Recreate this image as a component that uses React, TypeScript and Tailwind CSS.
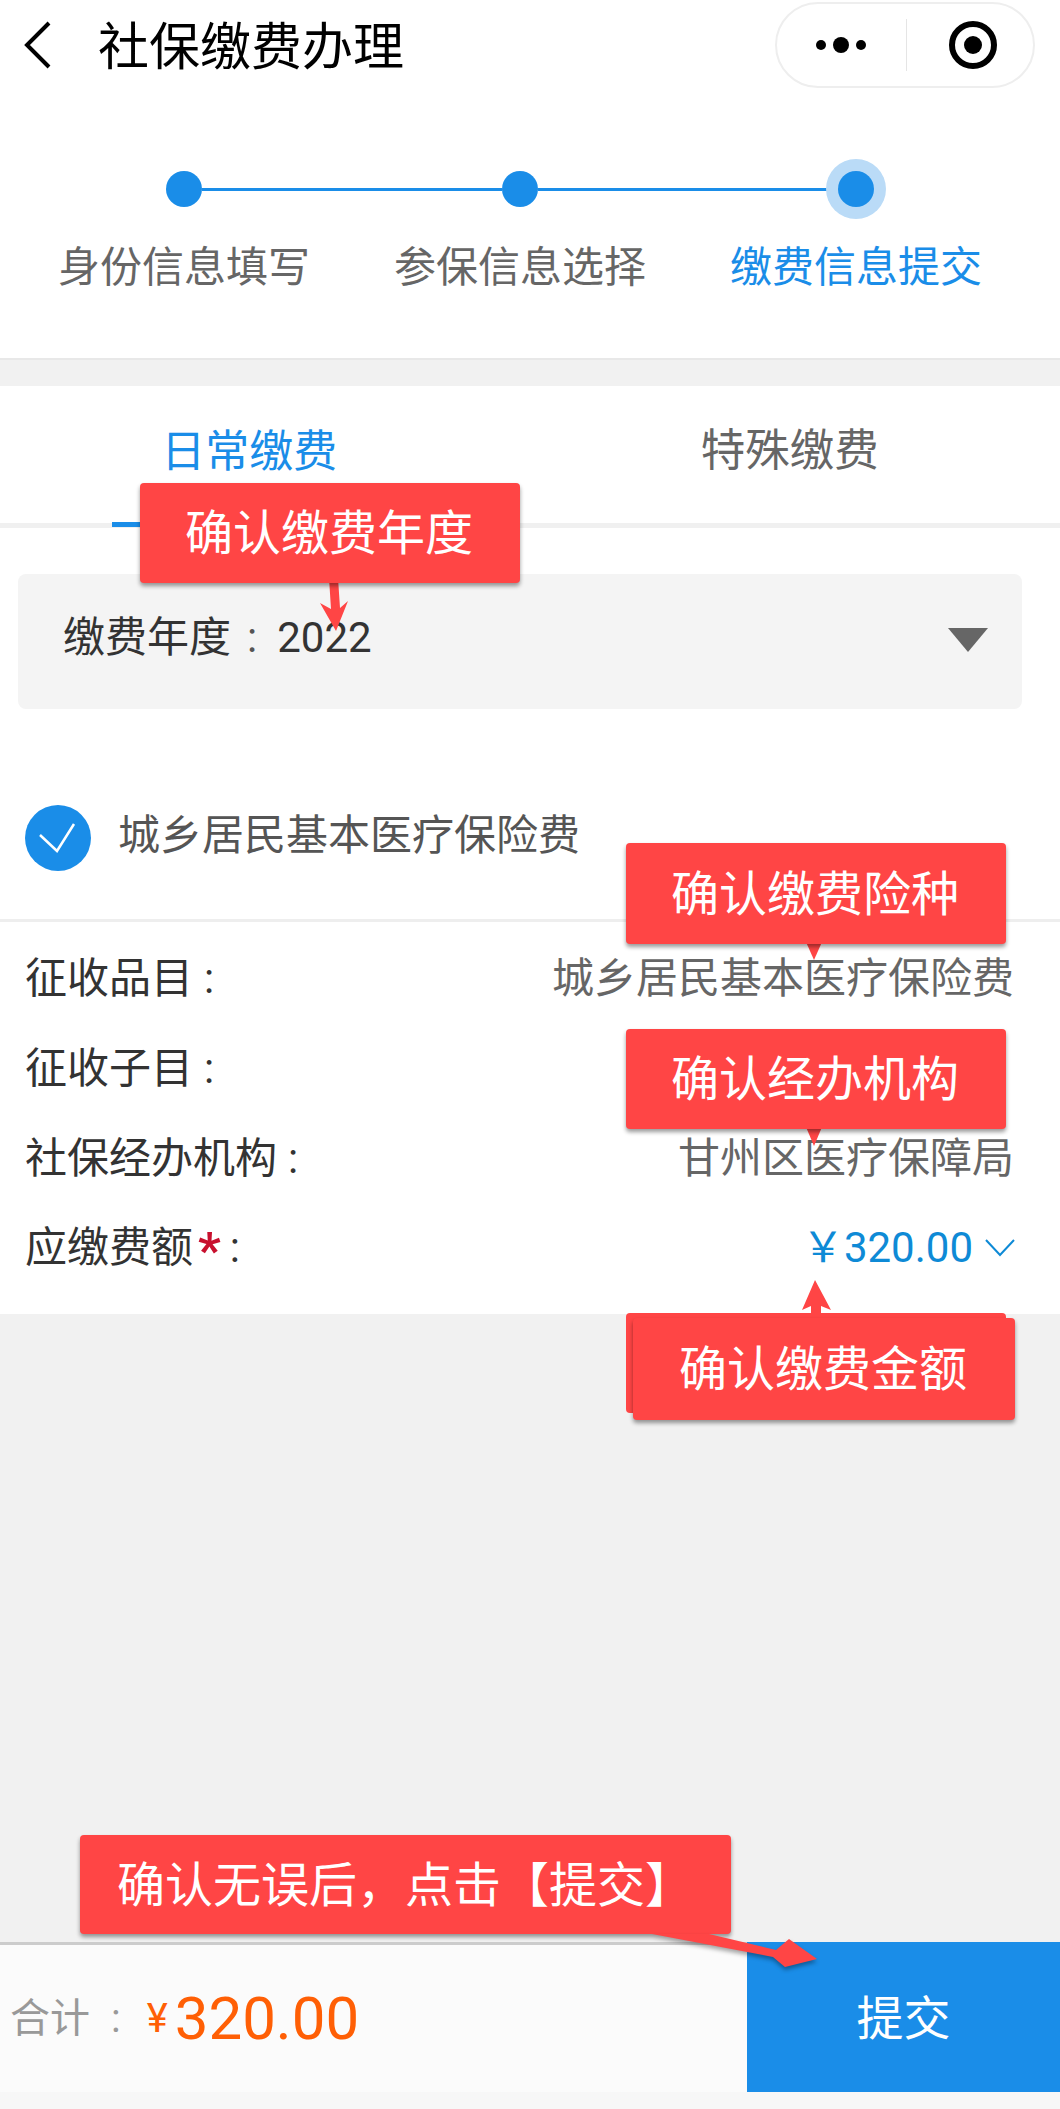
import React from "react";

const font = { fontFamily: 'Roboto, "Noto Sans CJK SC", sans-serif' };

function Callout({ className, children }: { className: string; children: React.ReactNode }) {
  return (
    <div className={"absolute flex items-center justify-center rounded-[4px] bg-[#ff4545] pt-[2px] text-[48px] leading-none text-white shadow-[0_3px_4px_rgba(0,0,0,0.4)] " + className}>
      {children}
    </div>
  );
}

function Row({ label, value }: { label: string; value?: string }) {
  return (
    <div className="flex h-[90px] items-center justify-between pl-[25px] pr-[46px]">
      <span className="text-[#333]">
        {label}
        <span className="ml-[11px]">:</span>
      </span>
      {value && <span className="text-[#666]">{value}</span>}
    </div>
  );
}

export default function App() {
  return (
    <div style={font} className="relative h-[2109px] w-[1060px] overflow-hidden bg-[#f7f7f7] text-[42px] leading-none">
      {/* header */}
      <header className="relative flex h-[88px] items-center bg-white pl-[24px]">
        <svg width="28" height="48" viewBox="0 0 28 48" className="mt-[2px]" fill="none" stroke="#000" strokeWidth="4">
          <path d="M25 2 3 24l22 22" />
        </svg>
        <h1 className="ml-[46px] mt-[6px] text-[51px] font-normal text-black">社保缴费办理</h1>
        <div className="absolute left-[775px] top-[2px] flex h-[86px] w-[260px] items-center rounded-[43px] border-[2px] border-[#eeeeee]">
          <svg width="52" height="16" viewBox="0 0 52 16" className="ml-[38px]" fill="#000">
            <circle cx="6" cy="8" r="5" />
            <circle cx="26" cy="8" r="8" />
            <circle cx="46" cy="8" r="5" />
          </svg>
          <div className="ml-[39px] h-[52px] w-[1px] bg-[#e5e5e5]" />
          <svg width="50" height="50" viewBox="0 0 50 50" className="ml-[41px]" fill="none">
            <circle cx="25" cy="25" r="21" stroke="#000" strokeWidth="6" />
            <circle cx="25" cy="25" r="9" fill="#000" />
          </svg>
        </div>
      </header>

      {/* stepper */}
      <section className="h-[272px] border-b-[2px] border-[#e8e8e8] bg-white pt-[83px]">
        <div className="flex items-center pl-[166px] pr-[186px]">
          <div className="h-[36px] w-[36px] rounded-full bg-[#1a8de8]" />
          <div className="h-[3px] flex-1 bg-[#1a8de8]" />
          <div className="h-[36px] w-[36px] rounded-full bg-[#1a8de8]" />
          <div className="h-[3px] flex-1 bg-[#1a8de8]" />
          <div className="h-[36px] w-[36px] rounded-full bg-[#1a8de8] shadow-[0_0_0_12px_#badbf7]" />
        </div>
        <div className="mt-[40px] grid grid-cols-3 pl-[16px] pr-[36px] text-center text-[#666]">
          <span>身份信息填写</span>
          <span>参保信息选择</span>
          <span className="text-[#1a8de8]">缴费信息提交</span>
        </div>
      </section>

      <div className="h-[26px] bg-[#f1f1f1]" />

      {/* main card */}
      <main className="bg-white">
        <div className="relative flex h-[142px] border-b-[5px] border-[#f0f0f0] text-[44px]">
          <div className="flex h-full flex-1 items-center justify-center pb-[6px] pr-[42px] text-[#1a8de8]">日常缴费</div>
          <div className="flex h-full flex-1 items-center justify-center pb-[6px] pr-[21px] text-[44.5px] text-[#666]">特殊缴费</div>
          <div className="absolute -bottom-[4px] left-[112px] h-[5px] w-[278px] bg-[#1a8de8]" />
        </div>

        <div className="pl-[18px] pr-[38px] pt-[46px]">
          <div className="flex h-[135px] items-start justify-between rounded-[8px] bg-[#f4f4f4] pl-[45px] pr-[34px] pt-[43px] text-[42px] text-[#333]">
            <span>缴费年度<span className="ml-[16px] mr-[20px] text-[#555]">:</span>2022</span>
            <svg width="40" height="24" viewBox="0 0 40 24" className="mt-[11px]" fill="#666">
              <path d="M0 0h40L20 24z" />
            </svg>
          </div>
        </div>

        <div className="flex h-[213px] items-start border-b-[3px] border-[#eeeeee] pl-[25px] pt-[96px] text-[#555]">
          <div className="flex h-[66px] w-[66px] items-center justify-center rounded-full bg-[#1a8de8]">
            <svg width="38" height="30" viewBox="0 0 38 30" fill="none" stroke="#fff" strokeWidth="2.5">
              <path d="M1 12l17 16L35 1" />
            </svg>
          </div>
          <span className="ml-[27px] mt-[10px]">城乡居民基本医疗保险费</span>
        </div>

        <div className="h-[392px] pt-[12px]">
          <Row label="征收品目" value="城乡居民基本医疗保险费" />
          <Row label="征收子目" />
          <Row label="社保经办机构" value="甘州区医疗保障局" />
          <div className="-mt-[1px] flex h-[90px] items-center justify-between pl-[25px] pr-[45px]">
            <span className="flex items-center text-[#333]">
              应缴费额
              <span className="ml-[5px] mt-[6px] text-[50px] font-bold leading-none text-[#c8102e]">*</span>
              <span className="ml-[9px]">:</span>
            </span>
            <span className="flex items-center text-[42px] text-[#0e8ad6]">
              <span>￥</span>320.00
              <svg width="30" height="20" viewBox="0 0 30 20" className="ml-[12px]" fill="none" stroke="#0e8ad6" strokeWidth="2">
                <path d="M1 2l14 15L29 2" />
              </svg>
            </span>
          </div>
        </div>
      </main>

      <div className="h-[628px] bg-[#f1f1f1]" />

      {/* footer */}
      <footer className="flex h-[150px] items-stretch border-t-[3px] border-[#cccccc] bg-[#fbfbfb]">
        <div className="flex flex-1 items-center pl-[10px] pt-[1px]">
          <span className="text-[40px] text-[#999]">合计<span className="ml-[21px] mr-[26px]">:</span></span>
          <span className="text-[40px] text-[#ff5f05]">¥</span>
          <span className="ml-[7px] text-[60px] text-[#ff5f05]">320.00</span>
        </div>
        <div className="-mt-[3px] flex w-[313px] items-center justify-center bg-[#1a8de8] pt-[3px] text-[47px] text-white">提交</div>
      </footer>

      {/* annotations */}
      <svg width="40" height="60" viewBox="0 0 40 60" className="absolute left-[314px] top-[578px]" fill="#ff4545">
        <path d="M15 0h9l2 30 8-7-12 30-16-28 11 6z" />
      </svg>
      <Callout className="left-[140px] top-[483px] h-[100px] w-[380px] pr-[2px]">确认缴费年度</Callout>

      <svg width="16" height="20" viewBox="0 0 16 20" className="absolute left-[806px] top-[942px]" fill="#ff4545">
        <path d="M0 0h16l-8 18z" />
      </svg>
      <Callout className="left-[626px] top-[843px] h-[101px] w-[380px] pr-[2px]">确认缴费险种</Callout>

      <svg width="16" height="20" viewBox="0 0 16 20" className="absolute left-[806px] top-[1127px]" fill="#ff4545">
        <path d="M0 0h16l-8 19z" />
      </svg>
      <Callout className="left-[626px] top-[1029px] h-[100px] w-[380px] pr-[2px]">确认经办机构</Callout>

      <svg width="32" height="44" viewBox="0 0 32 44" className="absolute left-[800px] top-[1279px]" fill="#ff4545">
        <path d="M15 1l16 30-10-4v17h-10V27L2 31z" />
      </svg>
      <div className="absolute left-[626px] top-[1313px] h-[100px] w-[380px] rounded-[4px] bg-[#ff4545]" />
      <Callout className="left-[633px] top-[1318px] h-[102px] w-[382px] pr-[2px]">确认缴费金额</Callout>

      <Callout className="left-[80px] top-[1835px] h-[99px] w-[651px] justify-start pl-[37px]">确认无误后，点击【提交】</Callout>
      <svg width="190" height="50" viewBox="0 0 190 50" className="absolute left-[640px] top-[1930px] drop-shadow-[0_3px_2px_rgba(0,0,0,0.35)]" fill="#ff4545">
        <path d="M12 4h57l67 16 13-11 28 20-32 8-12-10z" />
      </svg>
    </div>
  );
}
